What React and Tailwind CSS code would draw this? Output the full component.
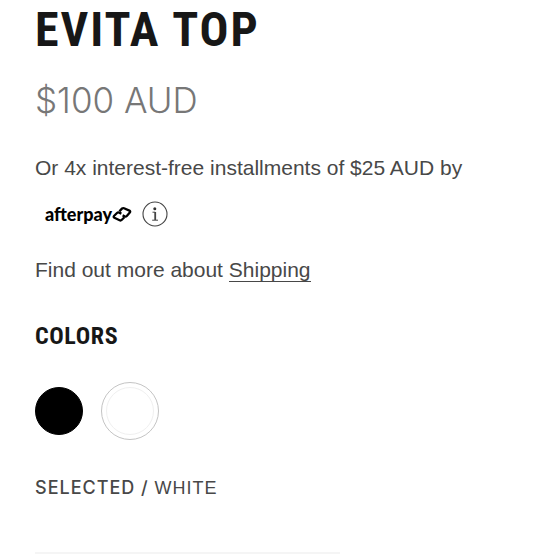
import { useState } from "react";

function AfterpayMark() {
  return (
    <svg viewBox="0 0 20 18" className="h-[18px] w-5" fill="none" stroke="currentColor" strokeWidth="2.3" strokeLinejoin="round" aria-hidden="true">
      <path d="M7.4 6.4L10.2 3.4Q11 2.8 12 3.2L17.4 5.6Q18.8 6.4 17.8 7.6L14.8 11Q13.8 12 12.6 11.4L10.6 10.4" />
      <path d="M12.4 12.2L9.6 15Q8.8 15.8 7.6 15.2L2.4 12.8Q1 12 2.2 10.8L5 8Q6 7 7.2 7.6L9.4 8.6" />
    </svg>
  );
}

function InfoIcon() {
  return (
    <svg viewBox="0 0 26 26" className="size-[26px]" fill="none" stroke="#444" aria-hidden="true">
      <circle cx="13" cy="13" r="12" strokeWidth="1.1" />
      <circle cx="12.8" cy="7.7" r="1.5" fill="#333" stroke="none" />
      <path d="M10.5 11.2H13.2M10.2 19.2H16" strokeWidth="1" />
      <path d="M13.2 11V19" strokeWidth="1.8" />
    </svg>
  );
}

const colors = [
  { name: "Black", fill: "bg-black border-black" },
  { name: "White", fill: "bg-white border-[#f0f0f0]" },
];

export default function App() {
  const [selected, setSelected] = useState("White");
  return (
    <main className="min-h-screen bg-white px-[35px] pt-1 font-['Liberation_Sans',Arial,sans-serif] text-[#484848]">
      <h1 className="font-['Roboto_Condensed','Liberation_Sans_Narrow',sans-serif] text-5xl leading-[52px] font-bold tracking-[2px] text-[#171717]">
        EVITA TOP
      </h1>
      <p className="mt-6 font-['Inter',sans-serif] text-[35px] leading-10 font-light text-[#777]">$100 AUD</p>
      <p className="mt-9 text-[21px] leading-6">Or 4x interest-free installments of $25 AUD by</p>
      <div className="mt-5 flex h-7 items-center gap-2.5 pl-2.5">
        <span className="flex items-center text-black">
          <span className="font-['Lato',sans-serif] text-lg leading-6 font-black">afterpay</span>
          <AfterpayMark />
        </span>
        <button type="button" aria-label="Afterpay information" className="rounded-full">
          <InfoIcon />
        </button>
      </div>
      <p className="mt-7 text-[21px] leading-7">
        Find out more about{" "}
        <a href="#shipping" className="border-b border-[#484848]">Shipping</a>
      </p>
      <fieldset className="mt-[38px]">
        <legend className="font-['Roboto_Condensed','Liberation_Sans_Narrow',sans-serif] text-2xl leading-7 font-bold tracking-wide text-[#171717]">
          COLORS
        </legend>
        <div className="mt-8 flex h-[58px] items-center gap-[18px]">
          {colors.map(({ name, fill }) => (
            <label
              key={name}
              className={selected === name ? "flex rounded-full border border-[#c4c4c4] p-1" : "flex rounded-full"}
            >
              <input
                type="radio"
                name="color"
                value={name}
                aria-label={name}
                checked={selected === name}
                onChange={() => setSelected(name)}
                className={`size-12 cursor-pointer appearance-none rounded-full border ${fill}`}
              />
            </label>
          ))}
        </div>
      </fieldset>
      <p className="mt-9 text-lg leading-6 tracking-[1px] uppercase">
        <span className="font-['Inter',sans-serif] font-medium">Selected / </span>
        {selected}
      </p>
      <hr className="mt-[52px] w-[63%] border-t-2 border-[#f5f5f5]" />
    </main>
  );
}
